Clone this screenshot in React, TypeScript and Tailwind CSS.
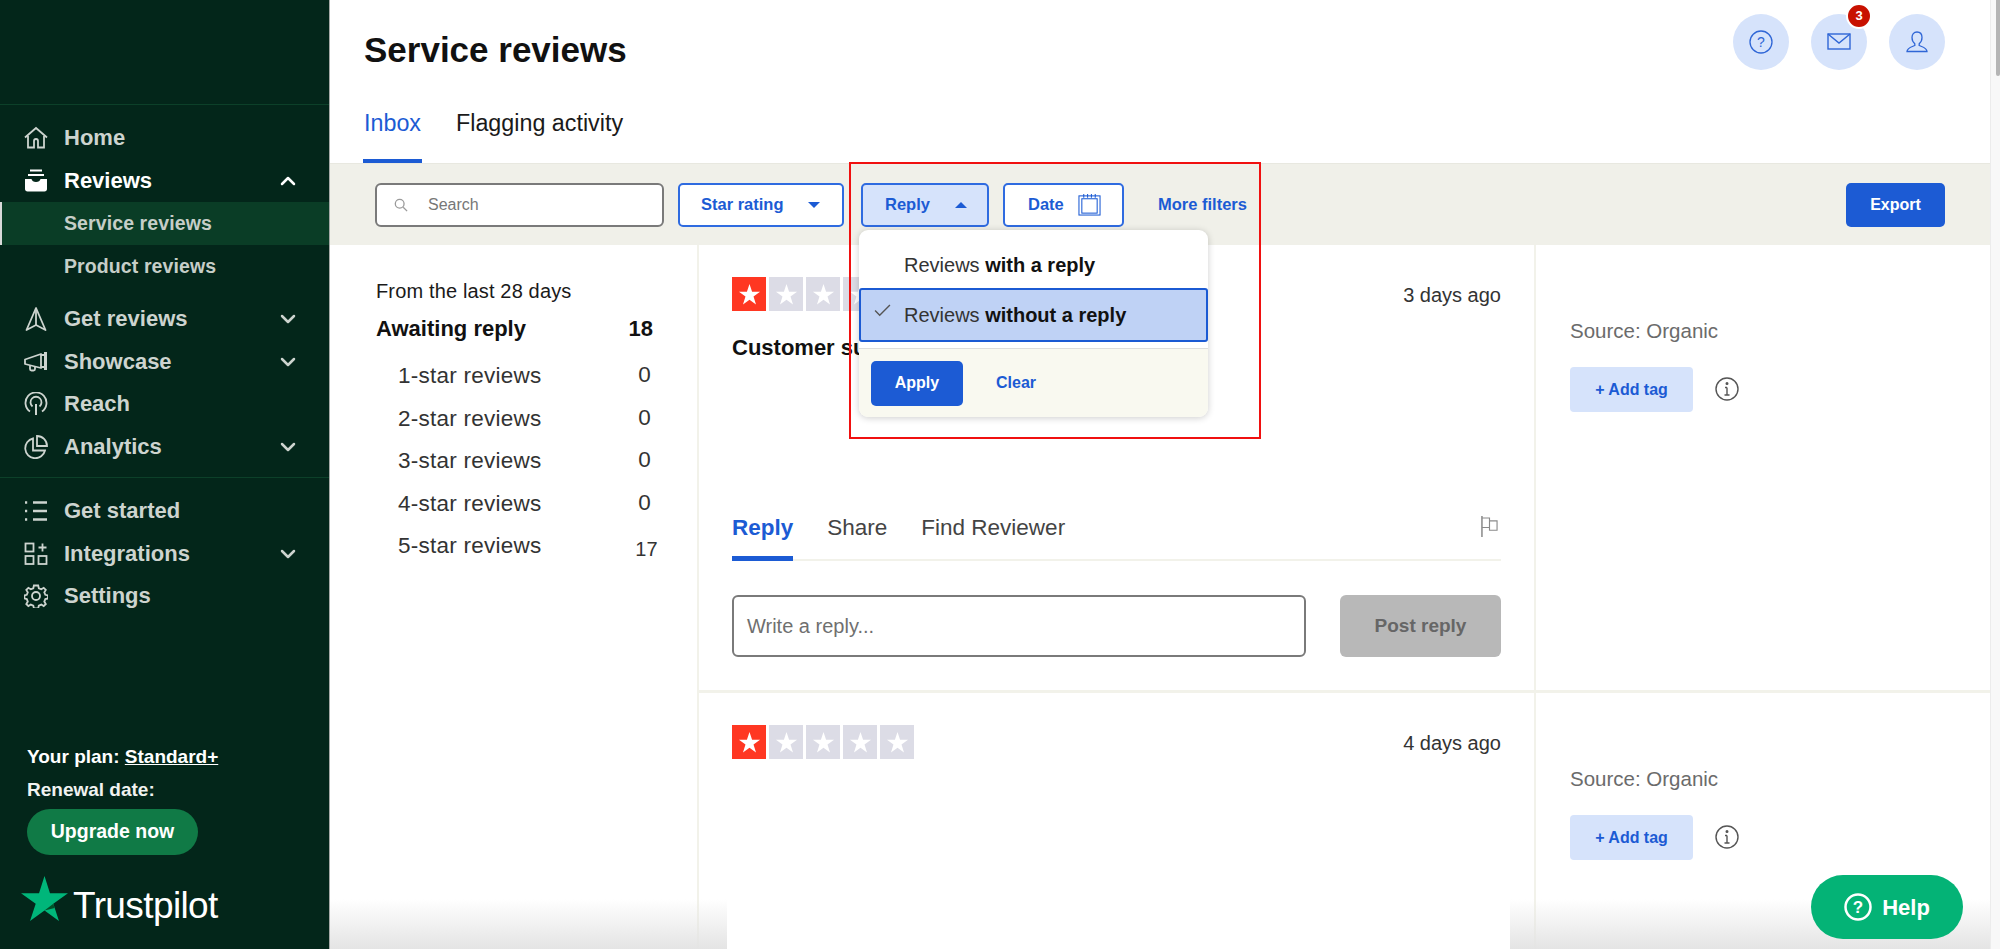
import { ChevronDown, ChevronUp } from 'lucide-react'
import type { ReactNode } from 'react'

const FONT = "font-['Liberation_Sans',Arial,sans-serif]"

function Icon({ children, className = 'w-6 h-6' }: { children: ReactNode; className?: string }) {
  return (
    <svg viewBox="0 0 24 24" fill="none" stroke="currentColor" strokeWidth="1.800" className={className}>
      {children}
    </svg>
  )
}

const HomeIcon = () => (
  <Icon>
    <path d="M1 11.500 12 2l11 9.500" />
    <path d="M4 10v11.500h6V15a2 2 0 0 1 4 0v6.500h6V10" />
  </Icon>
)
const ReviewsIcon = () => (
  <Icon>
    <path d="M6 1.500h12M4 6h16" strokeWidth="2" />
    <path
      d="M1 10h6.500c.5 2 2 3 4.500 3s4-1 4.500-3H23v10c0 1.500-1 2.500-2.500 2.500h-17C2 22.500 1 21.500 1 20Z"
      fill="currentColor"
      stroke="none"
    />
  </Icon>
)
const GetReviewsIcon = () => (
  <Icon>
    <path d="M12 1 2.500 23l9.500-5 9.500 5Z" strokeLinejoin="round" />
    <path d="M12 1v17" />
  </Icon>
)
const ShowcaseIcon = () => (
  <Icon>
    <path d="M1 9.500 17 4v14L1 14Z" strokeLinejoin="round" />
    <path d="M6 15.500V19a1.500 1.500 0 0 0 1.500 1.500h2A1.500 1.500 0 0 0 11 19v-2.500" />
    <rect x="20" y="2" width="3" height="18" fill="currentColor" stroke="none" />
    <path d="M17 5h3M17 17h3" />
  </Icon>
)
const ReachIcon = () => (
  <Icon>
    <path d="M6 19.500a10.500 10.500 0 1 1 12 0" />
    <path d="M8.500 14.500a5.500 5.500 0 1 1 7 0" />
    <path d="M12 12v11" strokeWidth="2" />
  </Icon>
)
const AnalyticsIcon = () => (
  <Icon>
    <path d="M9 3.500a10 10 0 1 0 12 12H9Z" />
    <path d="M13 1a10 10 0 0 1 10 10H13Z" />
  </Icon>
)
const StartedIcon = () => (
  <Icon>
    <path d="M9 3.500h14M9 12h14M9 20.500h14" strokeWidth="2.400" />
    <path d="M1 3.500h2.200M1 12h2.200M1 20.500h2.200" strokeWidth="2.600" />
  </Icon>
)
const IntegrationsIcon = () => (
  <Icon>
    <rect x="1.500" y="1.500" width="8" height="8" />
    <rect x="1.500" y="14" width="8" height="8" />
    <rect x="14.500" y="14" width="8" height="8" />
    <path d="M18.500 1.500v8M14.500 5.500h8" />
  </Icon>
)
const SettingsIcon = () => (
  <Icon>
    <path d="M12 1.500l2.200 0 .6 2.800 2.500 1 2.400-1.500 2.100 2.100-1.500 2.400 1 2.500 2.700.6v3.100l-2.700.6-1 2.500 1.500 2.400-2.100 2.100-2.400-1.500-2.500 1-.6 2.700H9.900l-.6-2.700-2.500-1-2.400 1.500-2.100-2.100 1.500-2.400-1-2.500-2.300-.6v-3.100l2.300-.6 1-2.500-1.500-2.400 2.100-2.100 2.400 1.500 2.500-1 .6-2.800Z" />
    <circle cx="12" cy="12" r="4" />
  </Icon>
)

function NavRow({
  icon,
  label,
  chevron,
  active,
}: {
  icon: ReactNode
  label: string
  chevron?: 'up' | 'down'
  active?: boolean
}) {
  return (
    <div className={`h-[42.5px] pl-6 pr-[33px] flex items-center ${active ? 'text-white' : 'text-[#cdd4cf]'}`}>
      <div className="w-10 shrink-0">{icon}</div>
      <span className="text-[22px] font-bold leading-none flex-1">{label}</span>
      {chevron === 'up' && <ChevronUp className="w-6 h-6 -mr-1" strokeWidth={2.5} />}
      {chevron === 'down' && <ChevronDown className="w-6 h-6 -mr-1" strokeWidth={2.5} />}
    </div>
  )
}

function Sidebar() {
  return (
    <aside className="w-[330px] shrink-0 bg-[#03261a] border-r border-[#a5a9a7] flex flex-col">
      <div className="h-[105px] border-b border-[#0c4029] shrink-0" />
      <nav className="pt-[12px] pb-[9px] border-b border-[#0c4029]">
        <NavRow icon={<HomeIcon />} label="Home" />
        <NavRow icon={<ReviewsIcon />} label="Reviews" chevron="up" active />
        <div className="h-[42.5px] bg-[#0a3d26] border-l-2 border-[#d9d9d9] pl-[62px] flex items-center text-[19.500px] font-bold tracking-[0.1px] text-[#c6cec8]">
          Service reviews
        </div>
        <div className="h-[42.5px] pt-[2px] pl-16 flex items-center text-[19.500px] font-bold tracking-[0.1px] text-[#c6cec8] mb-[11px]">
          Product reviews
        </div>
        <NavRow icon={<GetReviewsIcon />} label="Get reviews" chevron="down" />
        <NavRow icon={<ShowcaseIcon />} label="Showcase" chevron="down" />
        <NavRow icon={<ReachIcon />} label="Reach" />
        <NavRow icon={<AnalyticsIcon />} label="Analytics" chevron="down" />
      </nav>
      <nav className="pt-[12px]">
        <NavRow icon={<StartedIcon />} label="Get started" />
        <NavRow icon={<IntegrationsIcon />} label="Integrations" chevron="down" />
        <NavRow icon={<SettingsIcon />} label="Settings" />
      </nav>
      <div className="mt-auto pl-[27px] pb-[28px] text-white">
        <p className="text-[19px] font-bold leading-[24px]">
          Your plan: <span className="underline">Standard+</span>
        </p>
        <p className="text-[19px] font-bold leading-[24px] mt-[9px] text-[#f0f2f0]">Renewal date:</p>
        <button className="mt-[7px] w-[171px] h-[46px] rounded-full bg-[#107a46] text-[19.500px] font-bold">
          Upgrade now
        </button>
        <div className="flex items-center -ml-[6px] mt-[20px] h-[46px]">
          <svg viewBox="0 0 24 23" className="w-[47px] h-[45px] shrink-0">
            <path d="M12 0l2.800 8.800H24l-7.500 5.400 2.900 8.800L12 17.600 4.600 23l2.900-8.800L0 8.800h9.200Z" fill="#00b67a" />
            <path d="M16.500 14.200l.7 2.100-5.200 1.300Z" fill="#005128" />
          </svg>
          <span className="text-[37px] leading-none tracking-[-0.6px] ml-[5px] pt-[14px]">Trustpilot</span>
        </div>
      </div>
    </aside>
  )
}

function CircleButton({ children }: { children: ReactNode }) {
  return (
    <div className="relative w-14 h-14 rounded-full bg-[#d6e3fb] text-[#2f66d6] flex items-center justify-center">
      {children}
    </div>
  )
}

function Header() {
  return (
    <header className="h-[164px] shrink-0 border-b border-[#e8e8e0] pl-[34px] pr-[45px] flex flex-col">
      <div className="flex justify-between pt-[14px]">
        <h1 className="text-[35px] font-bold leading-none text-[#111] pt-[18px]">Service reviews</h1>
        <div className="flex gap-[22px]">
          <CircleButton>
            <svg viewBox="0 0 24 24" fill="none" stroke="currentColor" strokeWidth="1.300" className="w-6 h-6">
              <circle cx="12" cy="12" r="11" />
              <text x="12" y="17" textAnchor="middle" fontSize="14" fill="currentColor" stroke="none">
                ?
              </text>
            </svg>
          </CircleButton>
          <CircleButton>
            <svg viewBox="0 0 24 20" fill="none" stroke="currentColor" strokeWidth="1.400" className="w-6 h-5">
              <rect x="1" y="2" width="22" height="15" />
              <path d="M1 2l11 9 11-9" />
            </svg>
            <span className="absolute -top-[11px] left-[35px] w-[26px] h-[26px] rounded-full bg-[#c81100] border-2 border-white text-white text-[13px] font-bold flex items-center justify-center">
              3
            </span>
          </CircleButton>
          <CircleButton>
            <svg viewBox="0 0 24 24" fill="none" stroke="currentColor" strokeWidth="1.300" className="w-6 h-6">
              <path d="M12 2c3.300 0 5 2.500 5 5.500 0 2.800-1.300 5-2.800 6.200v1.800c2.500 1.200 7.800 2.300 7.800 6H2c0-3.700 5.300-4.800 7.800-6v-1.800C8.300 12.500 7 10.300 7 7.500 7 4.500 8.700 2 12 2Z" />
            </svg>
          </CircleButton>
        </div>
      </div>
      <div className="mt-auto flex gap-[34px] text-[23.300px] leading-none">
        <div className="text-[#1c5bd4] pb-[24px] border-b-[4px] border-[#1c5bd4] w-[59px] -ml-[1px] pl-[1px] whitespace-nowrap">Inbox</div>
        <div className="text-[#1a1a1a] pb-[24px]">Flagging activity</div>
      </div>
    </header>
  )
}

const btnBase =
  'h-[44px] rounded-[5px] border-2 border-[#2f6be0] text-[#1c5bd4] text-[16.500px] font-bold flex items-center shrink-0'

function FilterBar() {
  return (
    <div className="h-[81px] shrink-0 bg-[#f0f0e9] pl-[45px] pr-[45px] flex items-center">
      <div className="w-[289px] h-[44px] rounded-[6px] border-2 border-[#7a7a7a] bg-white flex items-center pl-[17px] text-[#777] text-[16px] shrink-0">
        <svg viewBox="0 0 16 16" fill="none" stroke="#9a9a9a" strokeWidth="1.500" className="w-[14px] h-[14px]">
          <circle cx="6.500" cy="6.500" r="5" />
          <path d="M10.500 10.500 15 15" />
        </svg>
        <span className="ml-[20px]">Search</span>
      </div>
      <div className={`${btnBase} ml-[14px] w-[166px] bg-white pl-[21px]`}>
        Star rating
        <span className="ml-[24px] w-0 h-0 border-x-[6px] border-x-transparent border-t-[6px] border-t-[#1c5bd4]" />
      </div>
      <div className={`${btnBase} ml-[17px] w-[128px] bg-[#d6e3fb] pl-[22px]`}>
        Reply
        <span className="ml-[25px] w-0 h-0 border-x-[6px] border-x-transparent border-b-[6px] border-b-[#1c5bd4]" />
      </div>
      <div className={`${btnBase} ml-[14px] w-[121px] bg-white pl-[23px]`}>
        Date
        <svg viewBox="0 0 24 24" fill="none" stroke="currentColor" strokeWidth="1.100" className="w-[23px] h-[23px] ml-[14px]">
          <rect x="1" y="3" width="22" height="20" />
          <rect x="4" y="6" width="16" height="15" />
          <path d="M6 1v4M10 1v4M14 1v4M18 1v4" />
        </svg>
      </div>
      <div className="ml-[34px] text-[16.500px] font-bold text-[#1c5bd4]">More filters</div>
      <button className="ml-auto w-[99px] h-[44px] rounded-[5px] bg-[#1c5bd4] text-white text-[16px] font-bold">
        Export
      </button>
    </div>
  )
}

function Stats() {
  const rows = [
    ['1-star reviews', '0'],
    ['2-star reviews', '0'],
    ['3-star reviews', '0'],
    ['4-star reviews', '0'],
  ]
  return (
    <div className="w-[367px] shrink-0 pl-[46px] pt-[35px] text-[#1a1a1a]">
      <p className="text-[20px] tracking-[0.15px] leading-[22px]">From the last 28 days</p>
      <div className="flex w-[276px] mt-[15px] text-[22px] font-bold leading-[24px] text-[#111] justify-between">
        <span>Awaiting reply</span>
        <span className="mr-[-1px]">18</span>
      </div>
      <div className="pl-[22px] mt-[14px]">
        {rows.map(([name, n]) => (
          <div key={name} className="flex w-[253px] justify-between h-[42.5px] items-center text-[22.500px] tracking-[0.25px] text-[#333]">
            <span>{name}</span>
            <span className="-mt-[2px]">{n}</span>
          </div>
        ))}
        <div className="flex w-[260px] justify-between h-[42.5px] items-center text-[22.500px] tracking-[0.25px] text-[#333]">
          <span>5-star reviews</span>
          <span className="mt-[6px] text-[20px]">17</span>
        </div>
      </div>
    </div>
  )
}

function Star() {
  return (
    <svg viewBox="0 0 24 24" className="w-[23px] h-[23px]">
      <path d="M12 1l2.700 8.200H23l-6.800 5 2.600 8.300L12 17.400 5.200 22.500l2.600-8.300L1 9.200h8.300Z" fill="#fff" />
    </svg>
  )
}

function Stars() {
  return (
    <div className="flex gap-[3px]">
      <div className="w-[34px] h-[34px] bg-[#ff3722] flex items-center justify-center">
        <Star />
      </div>
      {[1, 2, 3, 4].map((i) => (
        <div key={i} className="w-[34px] h-[34px] bg-[#dcdce6] flex items-center justify-center">
          <Star />
        </div>
      ))}
    </div>
  )
}

function SidePanel() {
  return (
    <div className="flex-1 pl-[34px] pt-[75px]">
      <p className="text-[20.500px] leading-[20px] text-[#6b6b6b] mt-[1px]">Source: Organic</p>
      <div className="flex items-center mt-[26px]">
        <button className="w-[123px] h-[45px] rounded-[4px] bg-[#d6e3fb] text-[#1c5bd4] text-[16px] font-bold">
          + Add tag
        </button>
        <svg viewBox="0 0 24 24" fill="none" stroke="#555" strokeWidth="1.400" className="w-6 h-6 ml-[22px] -mt-[2px]">
          <circle cx="12" cy="12" r="11" />
          <path d="M12 10.500V18M9.500 18h5M10 10.500h2" />
          <circle cx="12" cy="6.500" r="0.800" fill="#555" />
        </svg>
      </div>
    </div>
  )
}

function ReviewRow({ days, first }: { days: string; first?: boolean }) {
  return (
    <div className={`flex ${first ? 'h-[448px] border-b-[3px] border-[#f2f2ea]' : 'flex-1'}`}>
      <div className="w-[839px] shrink-0 border-x-2 border-[#f2f2ea] pl-[33px] pr-[33px] pt-[32px]">
        <div className="flex justify-between">
          <Stars />
          <span className="text-[20px] leading-none text-[#333] mt-[8px]">{days}</span>
        </div>
        {first && (
          <>
            <p className="text-[22px] font-bold leading-none text-[#111] mt-[26px]">Customer support</p>
            <div className="mt-[158px] flex gap-[34px] text-[22.500px] leading-none border-b-2 border-[#f2f2ea] h-[44px] relative">
              <span className="text-[#1c5bd4] font-bold border-b-[5px] border-[#1c5bd4] h-[44px] -mb-[2px]">Reply</span>
              <span className="text-[#444]">Share</span>
              <span className="text-[#444]">Find Reviewer</span>
              <svg viewBox="0 0 18 22" fill="none" stroke="#8a8a8a" strokeWidth="1.200" className="w-[17px] h-[21px] absolute right-[3px] -top-[1px]">
                <path d="M1 0v22" strokeWidth="1.600" />
                <path d="M1 2h8v10H1M9 5h8v10H9V12" />
              </svg>
            </div>
            <div className="flex justify-between mt-[34px]">
              <div className="w-[574px] h-[62px] rounded-[6px] border-2 border-[#7a7a7a] flex items-center pl-[13px] text-[20px] text-[#6f6f6f]">
                Write a reply...
              </div>
              <div className="w-[161px] h-[62px] rounded-[6px] bg-[#b8b8b8] flex items-center justify-center text-[19px] font-bold text-[#666]">
                Post reply
              </div>
            </div>
          </>
        )}
      </div>
      <SidePanel />
    </div>
  )
}

function ReplyMenu() {
  return (
    <div className="absolute left-[529px] top-[230px] w-[349px] h-[187px] rounded-[9px] bg-white shadow-[0_1px_7px_rgba(0,0,0,0.2)] flex flex-col text-[20px] text-[#333] overflow-hidden">
      <div className="h-[58px] shrink-0 pl-[45px] pt-[12px] flex items-center">
        <span>
          Reviews <b className="text-[#111]">with a reply</b>
        </span>
      </div>
      <div className="h-[54px] shrink-0 bg-[#bfd2f5] border-2 border-[#1b5ad3] rounded-[3px] pl-[43px] flex items-center relative">
        <svg viewBox="0 0 18 14" fill="none" stroke="#555" strokeWidth="1.500" className="absolute left-[13px] top-[14px] w-[17px] h-[13px]">
          <path d="M1 7l5 5L17 1" />
        </svg>
        <span>
          Reviews <b className="text-[#111]">without a reply</b>
        </span>
      </div>
      <div className="flex-1 mt-[6px] border-t border-[#ddd] bg-[#f9f9f0] pl-[12px] flex items-center">
        <button className="w-[92px] h-[45px] rounded-[5px] bg-[#1c5bd4] text-white text-[16px] font-bold">Apply</button>
        <span className="ml-[33px] text-[16px] font-bold text-[#1c5bd4]">Clear</span>
      </div>
    </div>
  )
}

export default function App() {
  return (
    <div className={`${FONT} w-[2000px] h-[949px] flex overflow-hidden bg-white relative`}>
      <Sidebar />
      <main className="w-[1660px] shrink-0 flex flex-col relative">
        <Header />
        <FilterBar />
        <div className="flex flex-1 min-h-0">
          <Stats />
          <div className="flex-1 flex flex-col">
            <ReviewRow days="3 days ago" first />
            <ReviewRow days="4 days ago" />
          </div>
        </div>
        {/* white patch behind the dropdown */}
        <div className="absolute left-[530px] top-[245px] w-[362px] h-[123px] bg-white/95" />
        <ReplyMenu />
        {/* annotation box */}
        <div className="absolute left-[519px] top-[162px] w-[412px] h-[277px] border-2 border-[#f01010]" />
        {/* fade at the bottom of the page */}
        <div className="absolute left-0 right-0 bottom-0 h-[50px] bg-gradient-to-b from-transparent to-[#e4e4e4]" />
        <div className="absolute left-[397px] bottom-0 w-[783px] h-[50px] bg-white" />
        <div className="absolute left-[1481px] top-[875px] w-[152px] h-[64px] rounded-full bg-[#04b376] text-white flex items-center justify-center gap-[10px] text-[22px] font-bold">
          <svg viewBox="0 0 28 28" fill="none" stroke="currentColor" strokeWidth="2.500" className="w-7 h-7">
            <circle cx="14" cy="14" r="12.500" />
            <text x="14" y="20" textAnchor="middle" fontSize="17" fontWeight="700" fill="currentColor" stroke="none">
              ?
            </text>
          </svg>
          Help
        </div>
      </main>
      <div className="w-[10px] shrink-0 bg-[#f8f8f8] border-l border-[#ececec] flex justify-end">
        <div className="w-[4px] h-[76px] bg-[#b5b5b5] rounded-b-[2px]" />
      </div>
    </div>
  )
}
